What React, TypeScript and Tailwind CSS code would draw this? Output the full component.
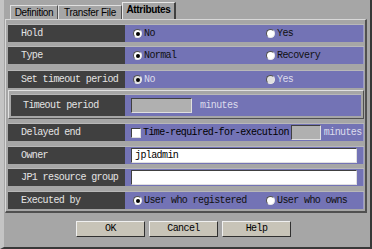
import React from "react";

const mono = "font-['Liberation_Mono',monospace] text-[10px] tracking-[-0.6px] leading-none whitespace-nowrap";

function Radio({ on, disabled }: { on?: boolean; disabled?: boolean }) {
  return (
    <span
      className={`relative inline-flex shrink-0 w-[9px] h-[9px] rounded-full border border-[#505050] border-r-[#e8e8e8] border-b-[#e8e8e8] items-center justify-center ${
        disabled ? "bg-[#e0e0e0]" : "bg-white"
      }`}
    >
      {on && <span className="w-[4px] h-[4px] rounded-full bg-black" />}
    </span>
  );
}

function Option({ label, on, disabled, width }: { label: string; on?: boolean; disabled?: boolean; width?: string }) {
  return (
    <div className={`flex items-center gap-[2px] ${width ?? ""}`}>
      <Radio on={on} disabled={disabled} />
      <span className={`${mono} ${disabled ? "text-[#dcdcec]" : "text-[#101010]"}`}>{label}</span>
    </div>
  );
}

function Row({ label, children }: { label: string; children?: React.ReactNode }) {
  return (
    <div className="flex h-[18px] border-t border-[#b8b8b8]">
      <div className={`w-[117px] pl-[13px] shrink-0 bg-[#404040] flex items-center ${mono} text-[#e4e4e4]`}>{label}</div>
      <div className="flex-1 bg-[#7373b5] flex items-center pl-[8px] border-r border-[#9a9ac8]">{children}</div>
    </div>
  );
}

function Field({ w, white, text }: { w: string; white?: boolean; text?: string }) {
  return (
    <div
      className={`${w} shrink-0 h-[15px] border border-[#404040] border-r-[#e0e0e0] border-b-[#e0e0e0] flex items-center pl-[3px] ${mono} text-black ${
        white ? "bg-white" : "bg-[#b0b0b0]"
      }`}
    >
      {text}
    </div>
  );
}

function Button({ label }: { label: string }) {
  return (
    <button className={`w-[69px] h-[16px] bg-[#c8c4b8] border border-[#f0f0f0] border-r-[#303030] border-b-[#303030] ${mono} text-black flex items-center justify-center`}>
      {label}
    </button>
  );
}

export default function App() {
  const tab = "font-['Liberation_Sans',Arial,sans-serif] text-[10px] tracking-[-0.3px] leading-none text-black";
  return (
    <div className="w-[372px] h-[249px] bg-[#a6a6a6] border-l-[4px] border-l-[#c4c4c4] border-r-2 border-r-[#383838] border-b-2 border-b-[#383838] flex flex-col overflow-hidden">
      {/* tabs */}
      <div className="h-[19px] flex items-end pl-[6px] pt-[2px]">
        <div className={`h-[14px] w-[48px] flex items-center justify-center border-t border-l border-[#e0e0e0] border-r border-r-[#505050] ${tab} text-[#202020]`}>
          Definition
        </div>
        <div className={`h-[14px] w-[64px] flex items-center justify-center border-t border-l border-[#e0e0e0] border-r border-r-[#505050] ${tab} text-[#202020]`}>
          Transfer File
        </div>
        <div className={`h-[17px] w-[54px] pb-[2px] flex items-center justify-center border-t border-l border-[#e8e8e8] border-r-2 border-r-[#404040] ${tab} font-bold`}>
          Attributes
        </div>
      </div>

      {/* panel */}
      <div className="ml-[1px] w-[362px] border-l border-t border-[#d8d8d8] border-r-2 border-r-[#505050] border-b-2 border-b-[#505050] pt-[4px] pb-[2px] pl-[2px] pr-[1px] flex flex-col">
        <Row label="Hold">
          <Option label="No" on width="w-[133px]" />
          <Option label="Yes" />
        </Row>
        <div className="h-[4px]" />
        <Row label="Type">
          <Option label="Normal" on width="w-[133px]" />
          <Option label="Recovery" />
        </Row>
        <div className="h-[6px]" />
        <Row label="Set timeout period">
          <Option label="No" on disabled width="w-[133px]" />
          <Option label="Yes" disabled />
        </Row>

        <div className="mt-[2px] border border-[#e0e0e0] border-r-[#505050] border-b-[#505050] px-[2px] pt-[3px] pb-[2px]">
          <div className="flex h-[22px] border-t border-[#b8b8b8]">
            <div className={`w-[114px] pl-[12px] shrink-0 bg-[#404040] flex items-center ${mono} text-[#e4e4e4]`}>Timeout period</div>
            <div className="flex-1 bg-[#7373b5] flex items-center pl-[6px] gap-[8px]">
              <Field w="w-[61px]" />
              <span className={`${mono} text-[#dcdcec]`}>minutes</span>
            </div>
          </div>
        </div>

        <div className="h-[4px]" />
        <Row label="Delayed end">
          <div className="flex items-center gap-[2px] -ml-[2px]">
            <span className="shrink-0 w-[10px] h-[10px] bg-white border border-[#404040] border-r-[#e0e0e0] border-b-[#e0e0e0]" />
            <span className={`${mono} text-black`}>Time-required-for-execution</span>
            <Field w="w-[30px]" />
            <span className={`${mono} text-[#dcdcec] ml-[1px]`}>minutes</span>
          </div>
        </Row>
        <div className="h-[5px]" />
        <Row label="Owner">
          <div className="pr-[6px] flex-1 flex">
            <Field w="flex-1 -ml-[2px]" white text="jpladmin" />
          </div>
        </Row>
        <div className="h-[4px]" />
        <Row label="JP1 resource group">
          <div className="pr-[6px] flex-1 flex">
            <Field w="flex-1 -ml-[2px]" white />
          </div>
        </Row>
        <div className="h-[5px]" />
        <Row label="Executed by">
          <Option label="User who registered" on width="w-[133px]" />
          <Option label="User who owns" />
        </Row>
      </div>

      {/* buttons */}
      <div className="flex gap-[4px] pl-[72px] mt-[8px]">
        <Button label="OK" />
        <Button label="Cancel" />
        <Button label="Help" />
      </div>
    </div>
  );
}
